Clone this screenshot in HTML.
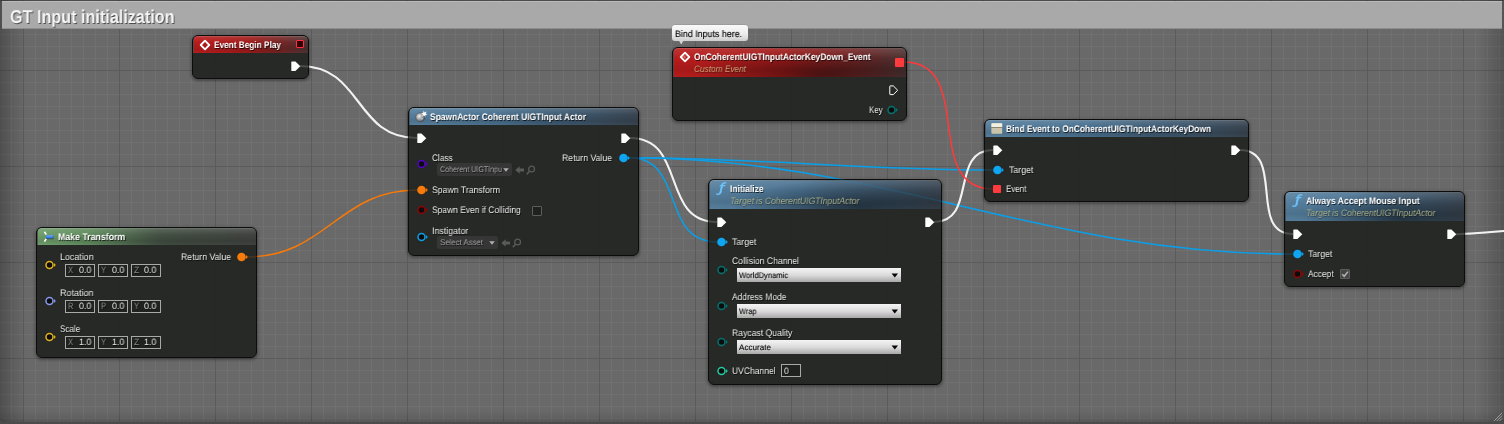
<!DOCTYPE html>
<html><head><meta charset="utf-8"><title>GT Input initialization</title>
<style>
html,body{margin:0;padding:0;background:#696969}
#g{position:relative;width:1504px;height:424px;overflow:hidden;font-family:"Liberation Sans",sans-serif;
 background-color:#696969;
 background-image:
  linear-gradient(to right,#5b5b5b 0,#5b5b5b 1px,transparent 1px),
  linear-gradient(to bottom,#5b5b5b 0,#5b5b5b 1px,transparent 1px),
  linear-gradient(to right,#707070 0,#707070 1px,transparent 1px),
  linear-gradient(to bottom,#707070 0,#707070 1px,transparent 1px);
 background-size:96px 96px,96px 96px,12px 12px,12px 12px;
 background-position:23px 0,0 70px,11px 0,0 10px;}
.a{position:absolute;display:block}
#vig{position:absolute;left:0;top:0;width:1504px;height:422px;box-sizing:border-box;
 background:linear-gradient(to right,rgba(0,0,0,.25) 0,rgba(0,0,0,.12) 12px,rgba(0,0,0,0) 26px),linear-gradient(to left,rgba(0,0,0,.2) 0,rgba(0,0,0,.1) 12px,rgba(0,0,0,0) 26px),linear-gradient(to top,rgba(0,0,0,.17) 0,rgba(0,0,0,.06) 6px,rgba(0,0,0,0) 12px);
 border-top:1px solid rgba(40,40,40,.25)}
#below{position:absolute;left:0;top:422px;width:1504px;height:2px;background:#4b4b4b}
#bar{position:absolute;left:2px;top:1px;width:1500px;height:28px;background:#a9a9a9;box-sizing:border-box;border-top:1px solid #b9b9b9;border-bottom:1px solid #8e8e8e}
#ct{position:absolute;white-space:nowrap;transform-origin:0 50%;text-rendering:geometricPrecision;will-change:transform;color:#f4f4f4;font-weight:bold;text-shadow:1px 1px 0 rgba(0,0,0,.55)}
.t{position:absolute;white-space:nowrap;line-height:14px;height:14px;color:#eaeaea;transform-origin:0 50%;text-rendering:geometricPrecision;will-change:transform;text-shadow:.8px .8px 0 rgba(0,0,0,.7)}
.t.ttl{color:#fff}
.t.sub{text-shadow:.6px .6px 0 rgba(0,0,0,.35)}
.t.ns{text-shadow:none;-webkit-text-stroke:.12px #000}
.node{position:absolute;box-sizing:border-box;border:1.4px solid #0c0c0c;border-radius:6px;background:rgba(35,38,35,.96);
 box-shadow:0 1px 3px 1px rgba(0,0,0,.33);overflow:hidden}
.hdr{position:absolute;left:0;top:0;right:0;box-sizing:border-box;border-top:1px solid rgba(255,255,255,.22);border-left:1px solid rgba(255,255,255,.10);border-radius:4px 4px 0 0}
.hdr:after{content:"";position:absolute;left:0;top:0;right:0;bottom:0;background:linear-gradient(to bottom,rgba(255,255,255,.10) 0%,rgba(255,255,255,0) 35%,rgba(0,0,0,.10) 75%,rgba(0,0,0,0) 100%)}
.vbox{position:absolute;box-sizing:border-box;width:29.6px;height:12.4px;border:1px solid #a9a9a9;background:rgba(0,0,0,.15)}
.combo{position:absolute;background:#363636;border-radius:2.5px}
.chk{position:absolute;box-sizing:border-box;width:10px;height:10px;border:1.3px solid #5c5c5c;border-radius:1px;background:rgba(0,0,0,.18)}
.chk.on{background:#454545;border-color:#5c5c5c}
.dd{position:absolute;background:linear-gradient(to bottom,#f4f4f4 0%,#dcdcdc 50%,#a8a8a8 100%)}
.bubble{position:absolute;border-radius:3px;background:linear-gradient(to bottom,#fafafa 0%,#ececec 55%,#cfcfcf 100%);box-shadow:0 0 0 .5px rgba(120,120,120,.5)}
.fi{position:absolute;font-family:"DejaVu Sans","Liberation Sans",sans-serif;font-style:italic;font-size:12.6px;-webkit-text-stroke:.45px #6ec3fa;line-height:16px;height:16px;color:#6ec3fa;transform:scaleX(1.22);transform-origin:0 50%;text-rendering:geometricPrecision;will-change:transform}
</style></head>
<body><div id="g">
<div id="vig"></div><div id="below"></div>
<svg class="a" style="left:0;top:418px" width="4" height="4" viewBox="0 0 4 4"><path d="M0 0Q0 4 4 4H0Z" fill="#4b4b4b"/></svg><svg class="a" style="left:1500px;top:418px" width="4" height="4" viewBox="0 0 4 4"><path d="M4 0Q4 4 0 4H4Z" fill="#4b4b4b"/></svg>
<div id="bar"></div>
<div id="ct" style="left:10px;top:5.2px;font-size:18.6px;line-height:24px;transform:scaleX(0.8703)">GT Input initialization</div>
<svg class="a" style="left:1492.5px;top:411.5px" width="10" height="10" viewBox="0 0 11 11"><path d="M1 10L10 1M4 10L10 4M7 10L10 7" stroke="#a4a4a4" stroke-width="1"/></svg>
<svg class="a" style="left:0;top:0" width="1504" height="424" viewBox="0 0 1504 424"><path d="M300 66C363.0 66 354.0 138 417 138" stroke="#f2f2f2" stroke-width="2.1" fill="none"/><path d="M247 257C326.0 257 338.0 190 417 190" stroke="#f77a0a" stroke-width="1.45" fill="none"/><path d="M630 138C687.0 138 660.0 222 717 222" stroke="#f2f2f2" stroke-width="2.1" fill="none"/><path d="M629 157.8C686.4 157.8 659.6 242 717 242" stroke="#0c9fe8" stroke-width="1.5" fill="none"/><path d="M629 157.8C754.4 157.8 867.6 170 993 170" stroke="#0c9fe8" stroke-width="1.5" fill="none"/><path d="M629 157.8C882.4 157.8 1039.6 254 1293 254" stroke="#0c9fe8" stroke-width="1.5" fill="none"/><path d="M934 222C977.7 222 949.3 150 993 150" stroke="#f2f2f2" stroke-width="2.1" fill="none"/><path d="M904 62C976.0 62 921.0 189 993 189" stroke="#ff3b3e" stroke-width="1.5" fill="none"/><path d="M1240 150C1285.7 150 1247.3 234 1293 234" stroke="#f2f2f2" stroke-width="2.1" fill="none"/><path d="M1456 234.2C1470.0 234.2 1546.0 227.2 1560 227.2" stroke="#f2f2f2" stroke-width="2.1" fill="none"/></svg><div class="node" style="left:192px;top:35px;width:117px;height:43.599999999999994px"><div class="hdr" style="height:16.6px;background:radial-gradient(ellipse 55% 100% at 64% 92%,rgba(0,0,0,.12),rgba(0,0,0,0) 100%),linear-gradient(to right,rgb(184,28,28) 0%,rgb(166,28,28) 48%,rgb(120,40,40) 78%,rgb(78,52,52) 100%)"></div></div><svg class="a" style="left:199px;top:39px" width="12" height="12" viewBox="0 0 12 12"><path d="M6 1.7L10.3 6L6 10.3L1.7 6Z" fill="none" stroke="#fff" stroke-width="1.8" stroke-linejoin="round"/><path d="M4.2 6L6 4.2L7.8 6L6 7.8Z" fill="#fff" opacity=".0"/></svg><div class="t ttl" style="left:214.40px;top:39px;font-size:9.6px;font-weight:bold;font-style:normal;transform:scaleX(0.8607);">Event Begin Play</div><div class="a" style="left:296px;top:40px;width:6px;height:6px;border:1.2px solid #ff2d3d;background:#2a0508;border-radius:1px"></div><svg class="a" style="left:291px;top:60.75px" width="10" height="11" viewBox="0 0 10 11"><path d="M0.9 0.4H4.4L9.3 5.25L4.4 10.1H0.9Q0.3 10.1 0.3 9.5V1Q0.3 0.4 0.9 0.4Z" fill="#fff"/></svg><div class="node" style="left:36px;top:227px;width:221px;height:130.5px"><div class="hdr" style="height:16.6px;background:radial-gradient(ellipse 55% 100% at 64% 92%,rgba(0,0,0,.12),rgba(0,0,0,0) 100%),linear-gradient(to right,rgb(110,158,106) 0%,rgb(96,138,94) 25%,rgb(72,86,72) 55%,rgb(66,68,66) 100%)"></div></div><svg class="a" style="left:43px;top:231px" width="12" height="12" viewBox="0 0 12 12"><path d="M1.4 0.8L3.3 3.6M1.4 10.6L3.3 7.8" stroke="#fff" stroke-width="1.6" fill="none"/><rect x="2.9" y="5.3" width="7.8" height="3" rx="1.3" fill="#1c241c" opacity=".7"/><rect x="2.6" y="4" width="7.8" height="3.4" rx="1.5" fill="#3a7be0"/><rect x="3.2" y="4.3" width="6.6" height="1.2" rx=".6" fill="#6aa6f8"/></svg><div class="t ttl" style="left:57.80px;top:231px;font-size:9.6px;font-weight:bold;font-style:normal;transform:scaleX(0.9131);">Make Transform</div><div class="t " style="left:60.40px;top:251px;font-size:9.5px;font-weight:normal;font-style:normal;transform:scaleX(0.9354);">Location</div><svg class="a" style="left:45px;top:260px" width="12" height="10" viewBox="0 0 12 10"><circle cx="4.5" cy="5" r="3.5" fill="#0c0c0c" stroke="#e2b21c" stroke-width="1.5"/><path d="M9 3.1L10.8 5L9 6.9Z" fill="#e2b21c"/></svg><div class="vbox" style="left:65px;top:264.4px"></div><div class="t " style="left:67.60px;top:263px;font-size:9.2px;font-weight:normal;font-style:normal;color:#8c8c8c;transform:scaleX(0.8468);">X</div><div class="t " style="left:79.00px;top:263px;font-size:9.2px;font-weight:normal;font-style:normal;transform:scaleX(0.9584);">0.0</div><div class="vbox" style="left:98px;top:264.4px"></div><div class="t " style="left:100.60px;top:263px;font-size:9.2px;font-weight:normal;font-style:normal;color:#8c8c8c;transform:scaleX(0.8468);">Y</div><div class="t " style="left:112.00px;top:263px;font-size:9.2px;font-weight:normal;font-style:normal;transform:scaleX(0.9584);">0.0</div><div class="vbox" style="left:131px;top:264.4px"></div><div class="t " style="left:133.60px;top:263px;font-size:9.2px;font-weight:normal;font-style:normal;color:#8c8c8c;transform:scaleX(0.9244);">Z</div><div class="t " style="left:144.20px;top:263px;font-size:9.2px;font-weight:normal;font-style:normal;transform:scaleX(0.9584);">0.0</div><div class="t " style="left:60.40px;top:287px;font-size:9.5px;font-weight:normal;font-style:normal;transform:scaleX(0.9494);">Rotation</div><svg class="a" style="left:45px;top:296px" width="12" height="10" viewBox="0 0 12 10"><circle cx="4.5" cy="5" r="3.5" fill="#0c0c0c" stroke="#8a98ee" stroke-width="1.5"/><path d="M9 3.1L10.8 5L9 6.9Z" fill="#8a98ee"/></svg><div class="vbox" style="left:65px;top:300.4px"></div><div class="t " style="left:67.60px;top:299px;font-size:9.2px;font-weight:normal;font-style:normal;color:#8c8c8c;transform:scaleX(0.7831);">R</div><div class="t " style="left:79.00px;top:299px;font-size:9.2px;font-weight:normal;font-style:normal;transform:scaleX(0.9584);">0.0</div><div class="vbox" style="left:98px;top:300.4px"></div><div class="t " style="left:100.60px;top:299px;font-size:9.2px;font-weight:normal;font-style:normal;color:#8c8c8c;transform:scaleX(0.8468);">P</div><div class="t " style="left:112.00px;top:299px;font-size:9.2px;font-weight:normal;font-style:normal;transform:scaleX(0.9584);">0.0</div><div class="vbox" style="left:131px;top:300.4px"></div><div class="t " style="left:133.60px;top:299px;font-size:9.2px;font-weight:normal;font-style:normal;color:#8c8c8c;transform:scaleX(0.8468);">Y</div><div class="t " style="left:144.20px;top:299px;font-size:9.2px;font-weight:normal;font-style:normal;transform:scaleX(0.9584);">0.0</div><div class="t " style="left:60.40px;top:323px;font-size:9.5px;font-weight:normal;font-style:normal;transform:scaleX(0.8500);">Scale</div><svg class="a" style="left:45px;top:332px" width="12" height="10" viewBox="0 0 12 10"><circle cx="4.5" cy="5" r="3.5" fill="#0c0c0c" stroke="#e2b21c" stroke-width="1.5"/><path d="M9 3.1L10.8 5L9 6.9Z" fill="#e2b21c"/></svg><div class="vbox" style="left:65px;top:336.4px"></div><div class="t " style="left:67.60px;top:335px;font-size:9.2px;font-weight:normal;font-style:normal;color:#8c8c8c;transform:scaleX(0.8468);">X</div><div class="t " style="left:79.00px;top:335px;font-size:9.2px;font-weight:normal;font-style:normal;transform:scaleX(0.9584);">1.0</div><div class="vbox" style="left:98px;top:336.4px"></div><div class="t " style="left:100.60px;top:335px;font-size:9.2px;font-weight:normal;font-style:normal;color:#8c8c8c;transform:scaleX(0.8468);">Y</div><div class="t " style="left:112.00px;top:335px;font-size:9.2px;font-weight:normal;font-style:normal;transform:scaleX(0.9584);">1.0</div><div class="vbox" style="left:131px;top:336.4px"></div><div class="t " style="left:133.60px;top:335px;font-size:9.2px;font-weight:normal;font-style:normal;color:#8c8c8c;transform:scaleX(0.9244);">Z</div><div class="t " style="left:144.20px;top:335px;font-size:9.2px;font-weight:normal;font-style:normal;transform:scaleX(0.9584);">1.0</div><div class="t " style="left:181.30px;top:251px;font-size:9.5px;font-weight:normal;font-style:normal;transform:scaleX(0.9132);">Return Value</div><svg class="a" style="left:237px;top:252px" width="12" height="10" viewBox="0 0 12 10"><circle cx="4.5" cy="5" r="4.3" fill="#f77a0a"/><path d="M9 3.1L10.8 5L9 6.9Z" fill="#f77a0a"/></svg><div class="node" style="left:408px;top:107px;width:231px;height:148.5px"><div class="hdr" style="height:16.6px;background:radial-gradient(ellipse 55% 100% at 64% 92%,rgba(0,0,0,.12),rgba(0,0,0,0) 100%),linear-gradient(to right,rgb(86,127,157) 0%,rgb(76,115,146) 40%,rgb(64,90,112) 75%,rgb(58,70,82) 100%)"></div></div><svg class="a" style="left:415px;top:110px" width="13" height="13" viewBox="0 0 13 13"><defs><radialGradient id="sg" cx=".38" cy=".36" r=".7"><stop offset="0" stop-color="#ededed"/><stop offset=".5" stop-color="#a2a2a2"/><stop offset="1" stop-color="#4a4a4a"/></radialGradient></defs><circle cx="5.3" cy="7.4" r="4.5" fill="url(#sg)" stroke="#3c4650" stroke-width=".5"/><circle cx="7" cy="8.8" r="1" fill="#9fd0f5" opacity=".7"/><path d="M8.8 0.4L9.5 2.6L11.9 1.6L10.6 3.6L12.6 4.6L10.4 4.9L10.2 7L9 5.3L7.2 6.4L7.9 4.3L5.9 3.4L8.1 3Z" fill="#fff"/></svg><div class="t ttl" style="left:430.40px;top:111px;font-size:9.6px;font-weight:bold;font-style:normal;transform:scaleX(0.8807);">SpawnActor Coherent UIGTInput Actor</div><svg class="a" style="left:417px;top:132.75px" width="10" height="11" viewBox="0 0 10 11"><path d="M0.9 0.4H4.4L9.3 5.25L4.4 10.1H0.9Q0.3 10.1 0.3 9.5V1Q0.3 0.4 0.9 0.4Z" fill="#fff"/></svg><svg class="a" style="left:621px;top:132.75px" width="10" height="11" viewBox="0 0 10 11"><path d="M0.9 0.4H4.4L9.3 5.25L4.4 10.1H0.9Q0.3 10.1 0.3 9.5V1Q0.3 0.4 0.9 0.4Z" fill="#fff"/></svg><div class="t " style="left:432.25px;top:152px;font-size:9.5px;font-weight:normal;font-style:normal;transform:scaleX(0.8731);">Class</div><svg class="a" style="left:417px;top:159.4px" width="12" height="10" viewBox="0 0 12 10"><circle cx="4.5" cy="5" r="3.5" fill="#0c0c0c" stroke="#5203c6" stroke-width="1.5"/><path d="M9 3.1L10.8 5L9 6.9Z" fill="#5203c6"/></svg><div class="combo" style="left:437px;top:163px;width:75px;height:13px"></div><div class="t " style="left:440.00px;top:163px;font-size:8.2px;font-weight:normal;font-style:normal;color:#a4a4a4;transform:scaleX(0.8677);">Coherent UIGTInpu</div><svg class="a" style="left:502px;top:167px" width="8" height="6" viewBox="0 0 8 6"><path d="M1.2 1.2L6.8 1.2L4 4.8Z" fill="#b0b0b0"/></svg><svg class="a" style="left:515px;top:164.5px" width="22" height="10" viewBox="0 0 22 10"><path d="M0.3 5L4.6 1.2V3.6H9V6.4H4.6V8.8Z" fill="#5a5a5a"/><circle cx="16.6" cy="4" r="2.9" fill="none" stroke="#5a5a5a" stroke-width="1.3"/><path d="M14.5 6.2L11.8 9.2" stroke="#5a5a5a" stroke-width="1.6"/></svg><div class="t " style="left:432.25px;top:184px;font-size:9.5px;font-weight:normal;font-style:normal;transform:scaleX(0.9133);">Spawn Transform</div><svg class="a" style="left:417px;top:185px" width="12" height="10" viewBox="0 0 12 10"><circle cx="4.5" cy="5" r="4.3" fill="#f77a0a"/><path d="M9 3.1L10.8 5L9 6.9Z" fill="#f77a0a"/></svg><div class="t " style="left:432.25px;top:204px;font-size:9.5px;font-weight:normal;font-style:normal;transform:scaleX(0.8892);">Spawn Even if Colliding</div><svg class="a" style="left:417px;top:205.25px" width="12" height="10" viewBox="0 0 12 10"><circle cx="4.5" cy="5" r="3.5" fill="#0c0c0c" stroke="#8e0606" stroke-width="1.5"/><path d="M9 3.1L10.8 5L9 6.9Z" fill="#8e0606"/></svg><div class="chk" style="left:532px;top:206px"></div><div class="t " style="left:432.25px;top:225px;font-size:9.5px;font-weight:normal;font-style:normal;transform:scaleX(0.9276);">Instigator</div><svg class="a" style="left:417px;top:231.9px" width="12" height="10" viewBox="0 0 12 10"><circle cx="4.5" cy="5" r="3.5" fill="#0c0c0c" stroke="#0c9fe8" stroke-width="1.5"/><path d="M9 3.1L10.8 5L9 6.9Z" fill="#0c9fe8"/></svg><div class="combo" style="left:437px;top:236px;width:61px;height:13px"></div><div class="t " style="left:439.50px;top:236px;font-size:8.2px;font-weight:normal;font-style:normal;color:#a4a4a4;transform:scaleX(0.9542);">Select Asset</div><svg class="a" style="left:488px;top:240px" width="8" height="6" viewBox="0 0 8 6"><path d="M1.2 1.2L6.8 1.2L4 4.8Z" fill="#b0b0b0"/></svg><svg class="a" style="left:501px;top:237.5px" width="22" height="10" viewBox="0 0 22 10"><path d="M0.3 5L4.6 1.2V3.6H9V6.4H4.6V8.8Z" fill="#5a5a5a"/><circle cx="16.6" cy="4" r="2.9" fill="none" stroke="#5a5a5a" stroke-width="1.3"/><path d="M14.5 6.2L11.8 9.2" stroke="#5a5a5a" stroke-width="1.6"/></svg><div class="t " style="left:562.40px;top:152px;font-size:9.5px;font-weight:normal;font-style:normal;transform:scaleX(0.9132);">Return Value</div><svg class="a" style="left:619px;top:152.75px" width="12" height="10" viewBox="0 0 12 10"><circle cx="4.5" cy="5" r="4.3" fill="#0ea6f2"/><path d="M9 3.1L10.8 5L9 6.9Z" fill="#0ea6f2"/></svg><div class="bubble" style="left:672px;top:25px;width:76px;height:16px"></div><svg class="a" style="left:678px;top:40px" width="7" height="5" viewBox="0 0 7 5"><path d="M0.6 0H5.8L3.2 4.4Z" fill="#d6d6d6"/></svg><div class="t ns" style="left:674.75px;top:28px;font-size:9.5px;font-weight:normal;font-style:normal;color:#000;transform:scaleX(0.9328);">Bind Inputs here.</div><div class="node" style="left:672px;top:47px;width:235px;height:74px"><div class="hdr" style="height:28.6px;background:radial-gradient(ellipse 55% 100% at 64% 92%,rgba(0,0,0,.46),rgba(0,0,0,0) 100%),linear-gradient(to right,rgb(184,28,28) 0%,rgb(166,28,28) 48%,rgb(120,40,40) 78%,rgb(78,52,52) 100%)"></div></div><svg class="a" style="left:679px;top:51px" width="12" height="12" viewBox="0 0 12 12"><path d="M6 1.7L10.3 6L6 10.3L1.7 6Z" fill="none" stroke="#fff" stroke-width="1.8" stroke-linejoin="round"/><path d="M3.4 6H6.2M6 4.4V7.6" stroke="#fff" stroke-width=".7" opacity=".6"/></svg><div class="t ttl" style="left:694.40px;top:51px;font-size:9.6px;font-weight:bold;font-style:normal;transform:scaleX(0.8742);">OnCoherentUIGTInputActorKeyDown_Event</div><div class="t sub" style="left:694.40px;top:62px;font-size:9.4px;font-weight:normal;font-style:italic;color:#c9a074;transform:scaleX(0.8830);">Custom Event</div><div class="a" style="left:895px;top:58px;width:8.5px;height:8.5px;background:#ff3b3e;border-radius:1px"></div><svg class="a" style="left:888.5px;top:84.75px" width="10" height="11" viewBox="0 0 10 11"><path d="M1.2 0.9H4.3L8.7 5.25L4.3 9.6H1.2Q0.8 9.6 0.8 9.2V1.3Q0.8 0.9 1.2 0.9Z" fill="none" stroke="#fff" stroke-width="1"/></svg><div class="t " style="left:868.50px;top:104px;font-size:9.5px;font-weight:normal;font-style:normal;transform:scaleX(0.8397);">Key</div><svg class="a" style="left:887px;top:105px" width="12" height="10" viewBox="0 0 12 10"><circle cx="4.5" cy="5" r="3.5" fill="#0c0c0c" stroke="#007672" stroke-width="1.5"/><path d="M9 3.1L10.8 5L9 6.9Z" fill="#007672"/></svg><div class="node" style="left:708px;top:179px;width:234px;height:205.5px"><div class="hdr" style="height:28.6px;background:radial-gradient(ellipse 55% 100% at 64% 92%,rgba(0,0,0,.46),rgba(0,0,0,0) 100%),linear-gradient(to right,rgb(86,127,157) 0%,rgb(76,115,146) 40%,rgb(64,90,112) 75%,rgb(58,70,82) 100%)"></div></div><div class="fi" style="left:719.4px;top:180.2px">&#402;</div><div class="t ttl" style="left:730.40px;top:183px;font-size:9.6px;font-weight:bold;font-style:normal;transform:scaleX(0.8875);">Initialize</div><div class="t sub" style="left:730.40px;top:194px;font-size:9.4px;font-weight:normal;font-style:italic;color:#a6ad88;transform:scaleX(0.9112);">Target is CoherentUIGTInputActor</div><svg class="a" style="left:717px;top:216.75px" width="10" height="11" viewBox="0 0 10 11"><path d="M0.9 0.4H4.4L9.3 5.25L4.4 10.1H0.9Q0.3 10.1 0.3 9.5V1Q0.3 0.4 0.9 0.4Z" fill="#fff"/></svg><svg class="a" style="left:925px;top:216.75px" width="10" height="11" viewBox="0 0 10 11"><path d="M0.9 0.4H4.4L9.3 5.25L4.4 10.1H0.9Q0.3 10.1 0.3 9.5V1Q0.3 0.4 0.9 0.4Z" fill="#fff"/></svg><div class="t " style="left:732.40px;top:236px;font-size:9.5px;font-weight:normal;font-style:normal;transform:scaleX(0.9240);">Target</div><svg class="a" style="left:717px;top:236.9px" width="12" height="10" viewBox="0 0 12 10"><circle cx="4.5" cy="5" r="4.3" fill="#0ea6f2"/><path d="M9 3.1L10.8 5L9 6.9Z" fill="#0ea6f2"/></svg><div class="t " style="left:732.25px;top:255px;font-size:9.5px;font-weight:normal;font-style:normal;transform:scaleX(0.9062);">Collision Channel</div><svg class="a" style="left:717px;top:265.05px" width="12" height="10" viewBox="0 0 12 10"><circle cx="4.5" cy="5" r="3.5" fill="#0c0c0c" stroke="#00736f" stroke-width="1.5"/><path d="M9 3.1L10.8 5L9 6.9Z" fill="#00736f"/></svg><div class="dd" style="left:737px;top:268.1px;width:164px;height:14px"></div><div class="t ns" style="left:739.20px;top:269px;font-size:8.1px;font-weight:normal;font-style:normal;color:#0a0a0a;transform:scaleX(0.9336);">WorldDynamic</div><svg class="a" style="left:890.5px;top:272.7px" width="8" height="5" viewBox="0 0 8 5"><path d="M0.6 0.4H7L3.8 4.4Z" fill="#050505"/></svg><div class="t " style="left:732.25px;top:291px;font-size:9.5px;font-weight:normal;font-style:normal;transform:scaleX(0.8879);">Address Mode</div><svg class="a" style="left:717px;top:301.05px" width="12" height="10" viewBox="0 0 12 10"><circle cx="4.5" cy="5" r="3.5" fill="#0c0c0c" stroke="#00736f" stroke-width="1.5"/><path d="M9 3.1L10.8 5L9 6.9Z" fill="#00736f"/></svg><div class="dd" style="left:737px;top:304.1px;width:164px;height:14px"></div><div class="t ns" style="left:739.20px;top:305px;font-size:8.1px;font-weight:normal;font-style:normal;color:#0a0a0a;transform:scaleX(0.9113);">Wrap</div><svg class="a" style="left:890.5px;top:308.7px" width="8" height="5" viewBox="0 0 8 5"><path d="M0.6 0.4H7L3.8 4.4Z" fill="#050505"/></svg><div class="t " style="left:732.25px;top:327px;font-size:9.5px;font-weight:normal;font-style:normal;transform:scaleX(0.9063);">Raycast Quality</div><svg class="a" style="left:717px;top:337.05px" width="12" height="10" viewBox="0 0 12 10"><circle cx="4.5" cy="5" r="3.5" fill="#0c0c0c" stroke="#00736f" stroke-width="1.5"/><path d="M9 3.1L10.8 5L9 6.9Z" fill="#00736f"/></svg><div class="dd" style="left:737px;top:340.1px;width:164px;height:14px"></div><div class="t ns" style="left:739.20px;top:341px;font-size:8.1px;font-weight:normal;font-style:normal;color:#0a0a0a;transform:scaleX(1.0015);">Accurate</div><svg class="a" style="left:890.5px;top:344.7px" width="8" height="5" viewBox="0 0 8 5"><path d="M0.6 0.4H7L3.8 4.4Z" fill="#050505"/></svg><div class="t " style="left:732.25px;top:365px;font-size:9.5px;font-weight:normal;font-style:normal;transform:scaleX(0.8972);">UVChannel</div><svg class="a" style="left:717px;top:365.6px" width="12" height="10" viewBox="0 0 12 10"><circle cx="4.5" cy="5" r="3.5" fill="#0c0c0c" stroke="#22c9a2" stroke-width="1.5"/><path d="M9 3.1L10.8 5L9 6.9Z" fill="#22c9a2"/></svg><div class="vbox" style="left:781px;top:364px;width:20px;height:13.4px"></div><div class="t " style="left:784.40px;top:364px;font-size:9.2px;font-weight:normal;font-style:normal;transform:scaleX(0.9171);">0</div><div class="node" style="left:984px;top:119px;width:265px;height:82.5px"><div class="hdr" style="height:16.6px;background:radial-gradient(ellipse 55% 100% at 64% 92%,rgba(0,0,0,.12),rgba(0,0,0,0) 100%),linear-gradient(to right,rgb(86,127,157) 0%,rgb(76,115,146) 40%,rgb(64,90,112) 75%,rgb(58,70,82) 100%)"></div></div><svg class="a" style="left:991px;top:123px" width="12" height="11" viewBox="0 0 12 11"><rect x=".4" y=".3" width="10.8" height="10.4" rx=".8" fill="#cac5aa"/><rect x=".4" y=".3" width="10.8" height="3.7" rx=".8" fill="#f1f0e2"/><rect x=".4" y="4" width="10.8" height=".7" fill="#6f6b58"/></svg><div class="t ttl" style="left:1006.25px;top:123px;font-size:9.6px;font-weight:bold;font-style:normal;transform:scaleX(0.8722);">Bind Event to OnCoherentUIGTInputActorKeyDown</div><svg class="a" style="left:993px;top:144.75px" width="10" height="11" viewBox="0 0 10 11"><path d="M0.9 0.4H4.4L9.3 5.25L4.4 10.1H0.9Q0.3 10.1 0.3 9.5V1Q0.3 0.4 0.9 0.4Z" fill="#fff"/></svg><svg class="a" style="left:1231px;top:144.75px" width="10" height="11" viewBox="0 0 10 11"><path d="M0.9 0.4H4.4L9.3 5.25L4.4 10.1H0.9Q0.3 10.1 0.3 9.5V1Q0.3 0.4 0.9 0.4Z" fill="#fff"/></svg><div class="t " style="left:1008.50px;top:164px;font-size:9.5px;font-weight:normal;font-style:normal;transform:scaleX(0.9240);">Target</div><svg class="a" style="left:993px;top:165px" width="12" height="10" viewBox="0 0 12 10"><circle cx="4.5" cy="5" r="4.3" fill="#0ea6f2"/><path d="M9 3.1L10.8 5L9 6.9Z" fill="#0ea6f2"/></svg><div class="a" style="left:993px;top:185px;width:8px;height:8px;background:#ff3b3e;border-radius:1px"></div><div class="t " style="left:1005.60px;top:183px;font-size:9.5px;font-weight:normal;font-style:normal;transform:scaleX(0.8396);">Event</div><div class="node" style="left:1284px;top:191px;width:181px;height:95.5px"><div class="hdr" style="height:28.6px;background:radial-gradient(ellipse 55% 100% at 64% 92%,rgba(0,0,0,.46),rgba(0,0,0,0) 100%),linear-gradient(to right,rgb(86,127,157) 0%,rgb(76,115,146) 40%,rgb(64,90,112) 75%,rgb(58,70,82) 100%)"></div></div><div class="fi" style="left:1295.1px;top:192.2px">&#402;</div><div class="t ttl" style="left:1306.25px;top:195px;font-size:9.6px;font-weight:bold;font-style:normal;transform:scaleX(0.8990);">Always Accept Mouse Input</div><div class="t sub" style="left:1306.25px;top:206px;font-size:9.4px;font-weight:normal;font-style:italic;color:#a6ad88;transform:scaleX(0.9112);">Target is CoherentUIGTInputActor</div><svg class="a" style="left:1293px;top:228.75px" width="10" height="11" viewBox="0 0 10 11"><path d="M0.9 0.4H4.4L9.3 5.25L4.4 10.1H0.9Q0.3 10.1 0.3 9.5V1Q0.3 0.4 0.9 0.4Z" fill="#fff"/></svg><svg class="a" style="left:1447px;top:228.75px" width="10" height="11" viewBox="0 0 10 11"><path d="M0.9 0.4H4.4L9.3 5.25L4.4 10.1H0.9Q0.3 10.1 0.3 9.5V1Q0.3 0.4 0.9 0.4Z" fill="#fff"/></svg><div class="t " style="left:1308.20px;top:248px;font-size:9.5px;font-weight:normal;font-style:normal;transform:scaleX(0.9240);">Target</div><svg class="a" style="left:1293px;top:248.9px" width="12" height="10" viewBox="0 0 12 10"><circle cx="4.5" cy="5" r="4.3" fill="#0ea6f2"/><path d="M9 3.1L10.8 5L9 6.9Z" fill="#0ea6f2"/></svg><div class="t " style="left:1308.20px;top:268px;font-size:9.5px;font-weight:normal;font-style:normal;transform:scaleX(0.8848);">Accept</div><svg class="a" style="left:1293px;top:269px" width="12" height="10" viewBox="0 0 12 10"><circle cx="4.5" cy="5" r="3.5" fill="#0c0c0c" stroke="#8e0606" stroke-width="1.5"/><path d="M9 3.1L10.8 5L9 6.9Z" fill="#8e0606"/></svg><div class="chk on" style="left:1340px;top:269px"><svg width="10" height="10" viewBox="0 0 10 10" style="position:absolute;left:-1px;top:-1px"><path d="M2.2 5.2L4.2 7.3L8 2.6" fill="none" stroke="#b4b4b4" stroke-width="1.5"/></svg></div><svg class="a" style="opacity:.15;left:0;top:0" width="1504" height="424" viewBox="0 0 1504 424"><path d="M300 66C363.0 66 354.0 138 417 138" stroke="#f2f2f2" stroke-width="2.1" fill="none"/><path d="M247 257C326.0 257 338.0 190 417 190" stroke="#f77a0a" stroke-width="1.45" fill="none"/><path d="M630 138C687.0 138 660.0 222 717 222" stroke="#f2f2f2" stroke-width="2.1" fill="none"/><path d="M629 157.8C686.4 157.8 659.6 242 717 242" stroke="#0c9fe8" stroke-width="1.5" fill="none"/><path d="M629 157.8C754.4 157.8 867.6 170 993 170" stroke="#0c9fe8" stroke-width="1.5" fill="none"/><path d="M629 157.8C882.4 157.8 1039.6 254 1293 254" stroke="#0c9fe8" stroke-width="1.5" fill="none"/><path d="M934 222C977.7 222 949.3 150 993 150" stroke="#f2f2f2" stroke-width="2.1" fill="none"/><path d="M904 62C976.0 62 921.0 189 993 189" stroke="#ff3b3e" stroke-width="1.5" fill="none"/><path d="M1240 150C1285.7 150 1247.3 234 1293 234" stroke="#f2f2f2" stroke-width="2.1" fill="none"/><path d="M1456 234.2C1470.0 234.2 1546.0 227.2 1560 227.2" stroke="#f2f2f2" stroke-width="2.1" fill="none"/></svg>
</div></body></html>
